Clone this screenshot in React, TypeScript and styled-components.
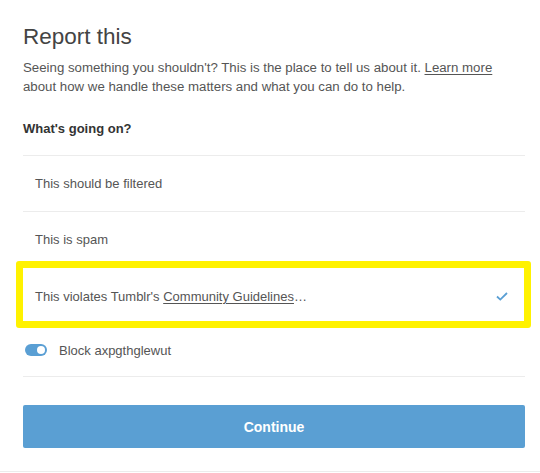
import styled, { createGlobalStyle } from 'styled-components'

const GlobalStyle = createGlobalStyle`
  body {
    margin: 0;
    background: #fff;
    font-family: "Liberation Sans", Arial, sans-serif;
    color: #444;
  }
`

function Check() {
  return (
    <svg width="12" height="9" viewBox="0 0 12 9">
      <polyline points="1,4.5 4.3,7.6 11,1" fill="none" stroke="#5a9fd4" strokeWidth="1.8" />
    </svg>
  )
}

const options = [
  { id: 'filtered', label: 'This should be filtered' },
  { id: 'spam', label: 'This is spam' },
]

function App() {
  return (
    <Modal>
      <GlobalStyle />
      <Header>
        <Title>Report this</Title>
        <Description>
          Seeing something you shouldn't? This is the place to tell us about it. <Link>Learn more</Link>{' '}
          about how we handle these matters and what you can do to help.
        </Description>
        <Question>What's going on?</Question>
      </Header>
      <OptionList>
        {options.map((o) => (
          <Option key={o.id}>{o.label}</Option>
        ))}
        <Option $selected>
          <span>
            This violates Tumblr's <Link>Community Guidelines</Link>…
          </span>
          <Check />
          <Highlight />
        </Option>
      </OptionList>
      <ToggleRow>
        <Toggle />
        <span>Block axpgthglewut</span>
      </ToggleRow>
      <Button>Continue</Button>
    </Modal>
  )
}

const Modal = styled.div`
  padding: 24px 15px 23px 23px;
  border-bottom: 1px solid #ececec;
`

const Header = styled.div`
  padding-bottom: 17px;
  border-bottom: 1px solid #ececec;
`

const Title = styled.h1`
  margin: 0;
  font-size: 22.5px;
  line-height: 26px;
  font-weight: normal;
  color: #444;
`

const Description = styled.p`
  max-width: 480px;
  margin: 8px 0 0;
  font-size: 13.25px;
  line-height: 19px;
  color: #555;
`

const Link = styled.span`
  text-decoration: underline;
  text-underline-offset: 2px;
`

const Question = styled.h2`
  margin: 23px 0 0;
  font-size: 13px;
  line-height: 19px;
  font-weight: bold;
  color: #333;
`

const OptionList = styled.div`
  display: flex;
  flex-direction: column;
`

const Option = styled.div<{ $selected?: boolean }>`
  position: relative;
  height: 56px;
  padding: 0 17px 0 12px;
  display: flex;
  align-items: center;
  justify-content: space-between;
  font-size: 13px;
  color: #555;
  border-bottom: ${(p) => (p.$selected ? 'none' : '1px solid #ececec')};
  box-sizing: border-box;
`

const Highlight = styled.div`
  position: absolute;
  top: -7px;
  left: -7px;
  right: -6px;
  bottom: -4px;
  border: 7px solid #fff200;
  border-radius: 3px;
  pointer-events: none;
`

const ToggleRow = styled.div`
  height: 53px;
  padding-left: 2px;
  display: flex;
  align-items: center;
  gap: 12px;
  font-size: 13px;
  color: #555;
  border-bottom: 1px solid #ececec;
  box-sizing: border-box;
`

const Toggle = styled.span`
  position: relative;
  width: 22px;
  height: 12px;
  border-radius: 6px;
  background: #5a9fd4;
  &::after {
    content: '';
    position: absolute;
    right: 2px;
    top: 2px;
    width: 8px;
    height: 8px;
    border-radius: 50%;
    background: #fff;
  }
`

const Button = styled.button`
  display: block;
  width: 100%;
  height: 43px;
  margin-top: 28px;
  border: none;
  border-radius: 2px;
  background: #5a9fd3;
  color: #fff;
  font-family: "Liberation Sans", Arial, sans-serif;
  font-size: 14px;
  font-weight: bold;
`

export default App
